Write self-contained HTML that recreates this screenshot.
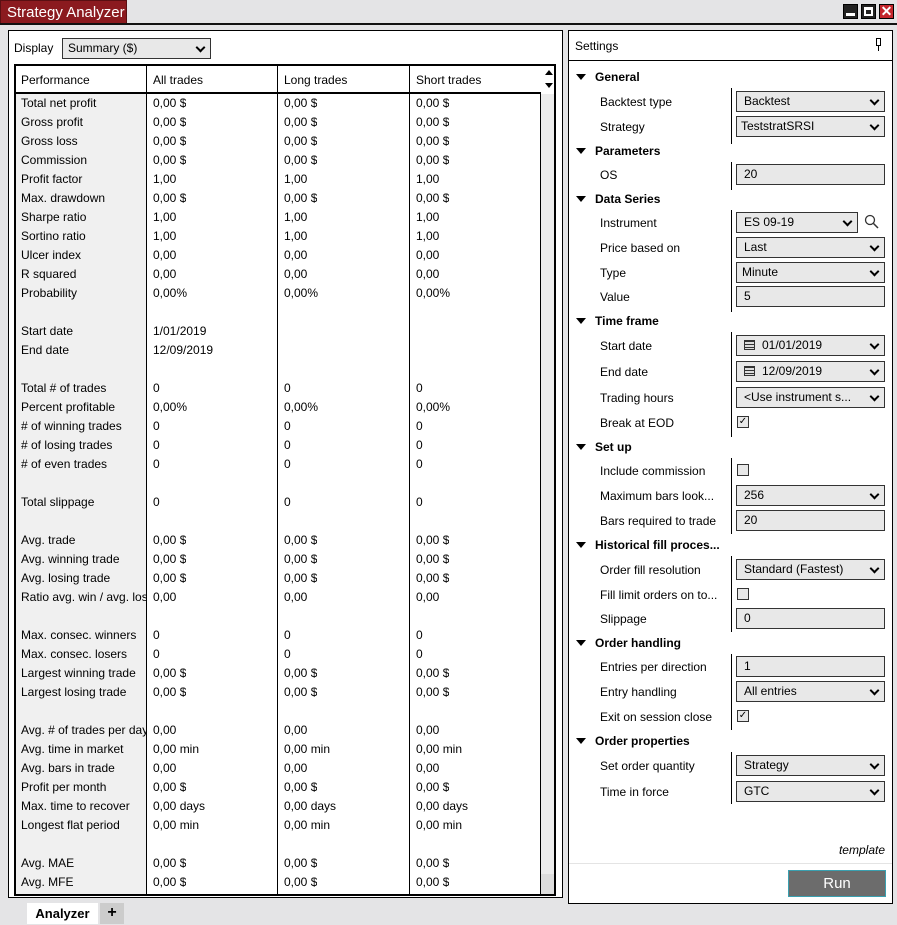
<!DOCTYPE html>
<html><head><meta charset="utf-8"><style>
*{box-sizing:border-box;margin:0;padding:0}
body{width:897px;height:924px;background:#e4e4e6;font-family:"Liberation Sans",sans-serif;font-size:12px;color:#000;position:relative;overflow:hidden}
.abs{position:absolute}
#title{left:0;top:0;width:127px;height:24px;background:#8b1a1f;color:#fff;font-size:15px;line-height:24px;padding-left:6px;border:1px solid #5a0f12}
#topline{left:0;top:23px;width:897px;height:2px;background:#111}
.wb{top:4px;width:15px;height:15px;background:#222;border:1px solid #000}
#left{left:8px;top:30px;width:555px;height:868px;background:#fff;border:1px solid #000}
#tbl{left:14px;top:64px;width:542px;height:832px;border:2px solid #000;background:#fff;overflow:hidden}
.col1{left:0;top:0;width:130px;height:830px;background:#f0f0f0}
.vl{width:1px;background:#000;top:0;height:830px}
.hdr{top:26px;left:0;width:526px;height:2px;background:#000}
.r{position:absolute;height:19px;line-height:19px;white-space:nowrap;overflow:hidden}
#right{left:568px;top:30px;width:325px;height:874px;background:#fff;border:1px solid #000}
.cat{position:absolute;left:7px;font-weight:bold;font-size:12px}
.cat:before{content:"";display:inline-block;border-left:5px solid transparent;border-right:5px solid transparent;border-top:6px solid #000;margin-right:9px;vertical-align:1px}
.lab{position:absolute;left:31px}
.inp{position:absolute;left:167px;width:149px;height:21px;background:#e8e8e8;border:1px solid #333;line-height:19px;padding-left:7px}
.dd:after{content:"";position:absolute;right:6px;top:5px;width:5px;height:5px;border-right:2px solid #000;border-bottom:2px solid #000;transform:rotate(45deg)}
.chk{position:absolute;left:168px;width:12px;height:12px;border:1px solid #333;background:#e8e8e8;font-size:10px;line-height:10px;text-align:center}
.dv{position:absolute;left:162px;width:1px;background:#000}
.cal{display:inline-block;width:11px;height:10px;border:1px solid #333;background:repeating-linear-gradient(#333 0 1px,#ddd 1px 3px);margin-right:7px;vertical-align:-1px}
</style></head><body>
<div id="title" class="abs">Strategy Analyzer</div>
<div id="topline" class="abs"></div>
<div class="abs wb" style="left:843px"><div style="position:absolute;left:2px;bottom:2px;width:9px;height:3px;background:#fff"></div></div>
<div class="abs wb" style="left:861px"><div style="position:absolute;left:2px;top:2px;width:9px;height:9px;border:2px solid #fff;border-top-width:3px"></div></div>
<div class="abs wb" style="left:879px;background:#c4262c;color:#fff;font-weight:bold;font-size:14px;line-height:13px;text-align:center">✕</div>

<div id="left" class="abs">
 <div class="abs" style="left:5px;top:10px">Display</div>
 <div class="abs dd" style="left:53px;top:7px;width:149px;height:21px;background:#e8e8e8;border:1px solid #333;line-height:19px;padding-left:5px">Summary ($)</div>
</div>
<div id="tbl" class="abs">
 <div class="abs col1"></div>
 <div class="abs vl" style="left:130px"></div>
 <div class="abs vl" style="left:261px"></div>
 <div class="abs vl" style="left:393px"></div>
 <div class="abs vl" style="left:524px"></div>
 <div class="abs" style="left:0;top:0;width:526px;height:26px;background:#fff"></div>
 <div class="abs" style="left:0;top:0;width:131px;height:26px;border-right:1px solid #000"></div>
 <div class="abs" style="left:131px;top:0;width:131px;height:26px;border-right:1px solid #000"></div>
 <div class="abs" style="left:262px;top:0;width:132px;height:26px;border-right:1px solid #000"></div>
 <div class="abs hdr"></div>
 <div class="abs" style="left:525px;top:0;width:15px;height:830px;background:#fff"></div>
 <div class="abs" style="left:525px;top:28px;width:13px;height:780px;background:#ececec"></div>
 <div class="abs" style="left:525px;top:808px;width:13px;height:22px;background:#ddd"></div>
 <div class="abs" style="left:529px;top:4px;border-left:4px solid transparent;border-right:4px solid transparent;border-bottom:5px solid #000"></div>
 <div class="abs" style="left:529px;top:17px;border-left:4px solid transparent;border-right:4px solid transparent;border-top:5px solid #000"></div>
 <div class="r" style="left:5px;top:5px">Performance</div><div class="r" style="left:137px;top:5px">All trades</div><div class="r" style="left:268px;top:5px">Long trades</div><div class="r" style="left:400px;top:5px">Short trades</div>
</div>
<div class="abs" style="left:16px;top:94px;width:540px;height:800px;overflow:hidden">
<div class="r" style="left:5px;top:0;width:125px">Total net profit</div><div class="r" style="left:137px;top:0">0,00 $</div><div class="r" style="left:268px;top:0">0,00 $</div><div class="r" style="left:400px;top:0">0,00 $</div>
<div class="r" style="left:5px;top:19px;width:125px">Gross profit</div><div class="r" style="left:137px;top:19px">0,00 $</div><div class="r" style="left:268px;top:19px">0,00 $</div><div class="r" style="left:400px;top:19px">0,00 $</div>
<div class="r" style="left:5px;top:38px;width:125px">Gross loss</div><div class="r" style="left:137px;top:38px">0,00 $</div><div class="r" style="left:268px;top:38px">0,00 $</div><div class="r" style="left:400px;top:38px">0,00 $</div>
<div class="r" style="left:5px;top:57px;width:125px">Commission</div><div class="r" style="left:137px;top:57px">0,00 $</div><div class="r" style="left:268px;top:57px">0,00 $</div><div class="r" style="left:400px;top:57px">0,00 $</div>
<div class="r" style="left:5px;top:76px;width:125px">Profit factor</div><div class="r" style="left:137px;top:76px">1,00</div><div class="r" style="left:268px;top:76px">1,00</div><div class="r" style="left:400px;top:76px">1,00</div>
<div class="r" style="left:5px;top:95px;width:125px">Max. drawdown</div><div class="r" style="left:137px;top:95px">0,00 $</div><div class="r" style="left:268px;top:95px">0,00 $</div><div class="r" style="left:400px;top:95px">0,00 $</div>
<div class="r" style="left:5px;top:114px;width:125px">Sharpe ratio</div><div class="r" style="left:137px;top:114px">1,00</div><div class="r" style="left:268px;top:114px">1,00</div><div class="r" style="left:400px;top:114px">1,00</div>
<div class="r" style="left:5px;top:133px;width:125px">Sortino ratio</div><div class="r" style="left:137px;top:133px">1,00</div><div class="r" style="left:268px;top:133px">1,00</div><div class="r" style="left:400px;top:133px">1,00</div>
<div class="r" style="left:5px;top:152px;width:125px">Ulcer index</div><div class="r" style="left:137px;top:152px">0,00</div><div class="r" style="left:268px;top:152px">0,00</div><div class="r" style="left:400px;top:152px">0,00</div>
<div class="r" style="left:5px;top:171px;width:125px">R squared</div><div class="r" style="left:137px;top:171px">0,00</div><div class="r" style="left:268px;top:171px">0,00</div><div class="r" style="left:400px;top:171px">0,00</div>
<div class="r" style="left:5px;top:190px;width:125px">Probability</div><div class="r" style="left:137px;top:190px">0,00%</div><div class="r" style="left:268px;top:190px">0,00%</div><div class="r" style="left:400px;top:190px">0,00%</div>
<div class="r" style="left:5px;top:228px;width:125px">Start date</div><div class="r" style="left:137px;top:228px">1/01/2019</div>
<div class="r" style="left:5px;top:247px;width:125px">End date</div><div class="r" style="left:137px;top:247px">12/09/2019</div>
<div class="r" style="left:5px;top:285px;width:125px">Total # of trades</div><div class="r" style="left:137px;top:285px">0</div><div class="r" style="left:268px;top:285px">0</div><div class="r" style="left:400px;top:285px">0</div>
<div class="r" style="left:5px;top:304px;width:125px">Percent profitable</div><div class="r" style="left:137px;top:304px">0,00%</div><div class="r" style="left:268px;top:304px">0,00%</div><div class="r" style="left:400px;top:304px">0,00%</div>
<div class="r" style="left:5px;top:323px;width:125px"># of winning trades</div><div class="r" style="left:137px;top:323px">0</div><div class="r" style="left:268px;top:323px">0</div><div class="r" style="left:400px;top:323px">0</div>
<div class="r" style="left:5px;top:342px;width:125px"># of losing trades</div><div class="r" style="left:137px;top:342px">0</div><div class="r" style="left:268px;top:342px">0</div><div class="r" style="left:400px;top:342px">0</div>
<div class="r" style="left:5px;top:361px;width:125px"># of even trades</div><div class="r" style="left:137px;top:361px">0</div><div class="r" style="left:268px;top:361px">0</div><div class="r" style="left:400px;top:361px">0</div>
<div class="r" style="left:5px;top:399px;width:125px">Total slippage</div><div class="r" style="left:137px;top:399px">0</div><div class="r" style="left:268px;top:399px">0</div><div class="r" style="left:400px;top:399px">0</div>
<div class="r" style="left:5px;top:437px;width:125px">Avg. trade</div><div class="r" style="left:137px;top:437px">0,00 $</div><div class="r" style="left:268px;top:437px">0,00 $</div><div class="r" style="left:400px;top:437px">0,00 $</div>
<div class="r" style="left:5px;top:456px;width:125px">Avg. winning trade</div><div class="r" style="left:137px;top:456px">0,00 $</div><div class="r" style="left:268px;top:456px">0,00 $</div><div class="r" style="left:400px;top:456px">0,00 $</div>
<div class="r" style="left:5px;top:475px;width:125px">Avg. losing trade</div><div class="r" style="left:137px;top:475px">0,00 $</div><div class="r" style="left:268px;top:475px">0,00 $</div><div class="r" style="left:400px;top:475px">0,00 $</div>
<div class="r" style="left:5px;top:494px;width:125px">Ratio avg. win / avg. loss</div><div class="r" style="left:137px;top:494px">0,00</div><div class="r" style="left:268px;top:494px">0,00</div><div class="r" style="left:400px;top:494px">0,00</div>
<div class="r" style="left:5px;top:532px;width:125px">Max. consec. winners</div><div class="r" style="left:137px;top:532px">0</div><div class="r" style="left:268px;top:532px">0</div><div class="r" style="left:400px;top:532px">0</div>
<div class="r" style="left:5px;top:551px;width:125px">Max. consec. losers</div><div class="r" style="left:137px;top:551px">0</div><div class="r" style="left:268px;top:551px">0</div><div class="r" style="left:400px;top:551px">0</div>
<div class="r" style="left:5px;top:570px;width:125px">Largest winning trade</div><div class="r" style="left:137px;top:570px">0,00 $</div><div class="r" style="left:268px;top:570px">0,00 $</div><div class="r" style="left:400px;top:570px">0,00 $</div>
<div class="r" style="left:5px;top:589px;width:125px">Largest losing trade</div><div class="r" style="left:137px;top:589px">0,00 $</div><div class="r" style="left:268px;top:589px">0,00 $</div><div class="r" style="left:400px;top:589px">0,00 $</div>
<div class="r" style="left:5px;top:627px;width:125px">Avg. # of trades per day</div><div class="r" style="left:137px;top:627px">0,00</div><div class="r" style="left:268px;top:627px">0,00</div><div class="r" style="left:400px;top:627px">0,00</div>
<div class="r" style="left:5px;top:646px;width:125px">Avg. time in market</div><div class="r" style="left:137px;top:646px">0,00 min</div><div class="r" style="left:268px;top:646px">0,00 min</div><div class="r" style="left:400px;top:646px">0,00 min</div>
<div class="r" style="left:5px;top:665px;width:125px">Avg. bars in trade</div><div class="r" style="left:137px;top:665px">0,00</div><div class="r" style="left:268px;top:665px">0,00</div><div class="r" style="left:400px;top:665px">0,00</div>
<div class="r" style="left:5px;top:684px;width:125px">Profit per month</div><div class="r" style="left:137px;top:684px">0,00 $</div><div class="r" style="left:268px;top:684px">0,00 $</div><div class="r" style="left:400px;top:684px">0,00 $</div>
<div class="r" style="left:5px;top:703px;width:125px">Max. time to recover</div><div class="r" style="left:137px;top:703px">0,00 days</div><div class="r" style="left:268px;top:703px">0,00 days</div><div class="r" style="left:400px;top:703px">0,00 days</div>
<div class="r" style="left:5px;top:722px;width:125px">Longest flat period</div><div class="r" style="left:137px;top:722px">0,00 min</div><div class="r" style="left:268px;top:722px">0,00 min</div><div class="r" style="left:400px;top:722px">0,00 min</div>
<div class="r" style="left:5px;top:760px;width:125px">Avg. MAE</div><div class="r" style="left:137px;top:760px">0,00 $</div><div class="r" style="left:268px;top:760px">0,00 $</div><div class="r" style="left:400px;top:760px">0,00 $</div>
<div class="r" style="left:5px;top:779px;width:125px">Avg. MFE</div><div class="r" style="left:137px;top:779px">0,00 $</div><div class="r" style="left:268px;top:779px">0,00 $</div><div class="r" style="left:400px;top:779px">0,00 $</div>
</div>

<div id="right" class="abs">
 <div class="abs" style="left:6px;top:8px">Settings</div>
 <div class="abs" style="left:307px;top:7px;width:5px;height:8px;border:1px solid #000"></div>
 <div class="abs" style="left:309px;top:15px;width:1px;height:5px;background:#000"></div>
 <div class="abs" style="left:0;top:29px;width:323px;height:1px;background:#000"></div>

 <div class="cat" style="top:39px">General</div>
 <div class="dv" style="top:57px;height:56px"></div>
 <div class="lab" style="top:64px">Backtest type</div><div class="inp dd" style="top:60px">Backtest</div>
 <div class="lab" style="top:89px">Strategy</div><div class="inp dd" style="top:85px;padding-left:4px">TeststratSRSI</div>
 <div class="cat" style="top:113px">Parameters</div>
 <div class="dv" style="top:131px;height:28px"></div>
 <div class="lab" style="top:137px">OS</div><div class="inp" style="top:133px">20</div>
 <div class="cat" style="top:161px">Data Series</div>
 <div class="dv" style="top:179px;height:102px"></div>
 <div class="lab" style="top:185px">Instrument</div><div class="inp dd" style="top:181px;width:122px">ES 09-19</div>
 <svg class="abs" style="left:295px;top:183px" width="16" height="16"><circle cx="6" cy="6" r="4.5" fill="none" stroke="#333" stroke-width="1.3"/><line x1="9.5" y1="9.5" x2="14" y2="14" stroke="#333" stroke-width="1.5"/></svg>
 <div class="lab" style="top:210px">Price based on</div><div class="inp dd" style="top:206px">Last</div>
 <div class="lab" style="top:235px">Type</div><div class="inp dd" style="top:231px;padding-left:5px">Minute</div>
 <div class="lab" style="top:259px">Value</div><div class="inp" style="top:255px">5</div>
 <div class="cat" style="top:283px">Time frame</div>
 <div class="dv" style="top:301px;height:105px"></div>
 <div class="lab" style="top:308px">Start date</div><div class="inp dd" style="top:304px"><span class="cal"></span>01/01/2019</div>
 <div class="lab" style="top:334px">End date</div><div class="inp dd" style="top:330px"><span class="cal"></span>12/09/2019</div>
 <div class="lab" style="top:360px">Trading hours</div><div class="inp dd" style="top:356px;overflow:hidden;white-space:nowrap;padding-right:20px">&lt;Use instrument s...</div>
 <div class="lab" style="top:385px">Break at EOD</div><div class="chk" style="top:385px">✓</div>
 <div class="cat" style="top:409px">Set up</div>
 <div class="dv" style="top:427px;height:76px"></div>
 <div class="lab" style="top:433px">Include commission</div><div class="chk" style="top:433px"></div>
 <div class="lab" style="top:458px">Maximum bars look...</div><div class="inp dd" style="top:454px">256</div>
 <div class="lab" style="top:483px">Bars required to trade</div><div class="inp" style="top:479px">20</div>
 <div class="cat" style="top:507px">Historical fill proces...</div>
 <div class="dv" style="top:525px;height:76px"></div>
 <div class="lab" style="top:532px">Order fill resolution</div><div class="inp dd" style="top:528px">Standard (Fastest)</div>
 <div class="lab" style="top:557px">Fill limit orders on to...</div><div class="chk" style="top:557px"></div>
 <div class="lab" style="top:581px">Slippage</div><div class="inp" style="top:577px">0</div>
 <div class="cat" style="top:605px">Order handling</div>
 <div class="dv" style="top:623px;height:76px"></div>
 <div class="lab" style="top:629px">Entries per direction</div><div class="inp" style="top:625px">1</div>
 <div class="lab" style="top:654px">Entry handling</div><div class="inp dd" style="top:650px">All entries</div>
 <div class="lab" style="top:679px">Exit on session close</div><div class="chk" style="top:679px">✓</div>
 <div class="cat" style="top:703px">Order properties</div>
 <div class="dv" style="top:721px;height:52px"></div>
 <div class="lab" style="top:728px">Set order quantity</div><div class="inp dd" style="top:724px">Strategy</div>
 <div class="lab" style="top:754px">Time in force</div><div class="inp dd" style="top:750px">GTC</div>

 <div class="abs" style="right:7px;top:812px;font-style:italic">template</div>
 <div class="abs" style="left:0;top:832px;width:323px;height:1px;background:#e4e4e4"></div>
 <div class="abs" style="left:219px;top:839px;width:98px;height:27px;background:#6c6c6c;border:1px solid #3aa0b0;color:#fff;font-size:15px;text-align:center;line-height:25px">Run</div>
</div>

<div class="abs" style="left:27px;top:903px;width:71px;height:21px;background:#fff;font-weight:bold;font-size:13px;text-align:center;line-height:22px">Analyzer</div>
<div class="abs" style="left:100px;top:903px;width:24px;height:21px;background:#ccc;font-weight:bold;font-size:16px;text-align:center;line-height:20px">+</div>
</body></html>
